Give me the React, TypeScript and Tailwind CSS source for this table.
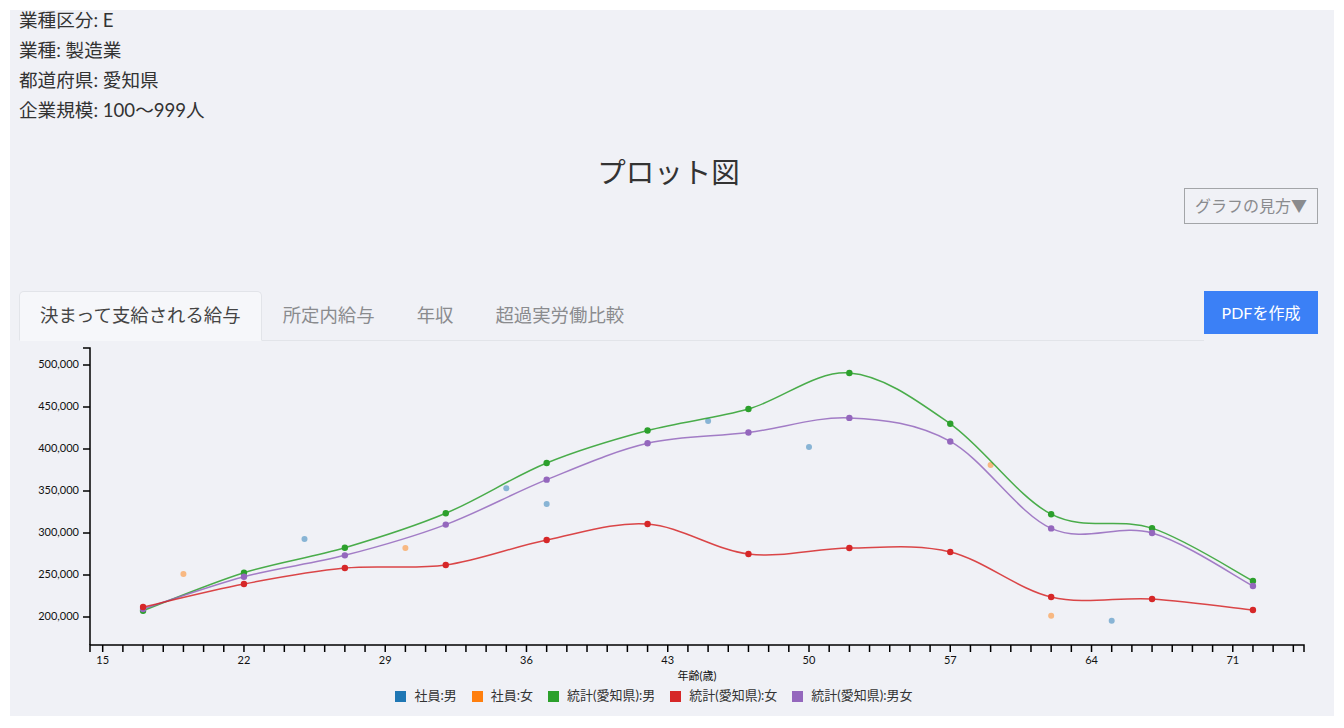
import React from 'react';

type Pt = [number, number];

const COLORS = {
  blue: '#1f77b4',
  orange: '#ff7f0e',
  green: '#2ca02c',
  red: '#d62728',
  purple: '#9467bd',
};

// 統計ライン (年齢, 円)
const statMale: Pt[] = [
  [17, 207500], [22, 252700], [27, 282500], [32, 323500], [37, 383300], [42, 422000],
  [47, 447600], [52, 490500], [57, 430000], [62, 322400], [67, 305800], [72, 242900],
];
const statBoth: Pt[] = [
  [17, 209500], [22, 248000], [27, 273400], [32, 310000], [37, 363500], [42, 406800],
  [47, 419600], [52, 437000], [57, 409000], [62, 305500], [67, 300000], [72, 236900],
];
const statFemale: Pt[] = [
  [17, 211900], [22, 239300], [27, 258300], [32, 261900], [37, 291700], [42, 310700],
  [47, 275000], [52, 282100], [57, 277400], [62, 223800], [67, 221400], [72, 208300],
];
const staffMale: Pt[] = [
  [25, 292900], [35, 353200], [37, 334500], [45, 433300], [50, 402400], [65, 195600],
];
const staffFemale: Pt[] = [
  [19, 251200], [30, 282100], [59, 381000], [62, 201500],
];

const X0 = 71;
const X1 = 1285;
const Y_TOP = 7;
const Y_BOTTOM = 304;

const xs = (age: number) => 83.7 + (age - 15) * 20.18;
const ys = (v: number) => 276 - (v - 200000) * 0.00084;

const cardinal = (pts: Pt[]) => {
  const p = pts.map(([a, v]) => [xs(a), ys(v)] as Pt);
  let d = `M${p[0][0]},${p[0][1]}`;
  for (let i = 0; i < p.length - 1; i++) {
    const p0 = p[Math.max(i - 1, 0)];
    const p1 = p[i];
    const p2 = p[i + 1];
    const p3 = p[Math.min(i + 2, p.length - 1)];
    const c1x = p1[0] + (p2[0] - p0[0]) / 6;
    const c1y = p1[1] + (p2[1] - p0[1]) / 6;
    const c2x = p2[0] - (p3[0] - p1[0]) / 6;
    const c2y = p2[1] - (p3[1] - p1[1]) / 6;
    d += ` C${c1x},${c1y} ${c2x},${c2y} ${p2[0]},${p2[1]}`;
  }
  return d;
};

const yTicks = [200000, 250000, 300000, 350000, 400000, 450000, 500000];
const xTicks = Array.from({ length: 60 }, (_, i) => 15 + i);
const xLabels = [15, 22, 29, 36, 43, 50, 57, 64, 71];

const lines = [
  { data: statMale, color: COLORS.green },
  { data: statBoth, color: COLORS.purple },
  { data: statFemale, color: COLORS.red },
];

const legend = [
  { label: '社員:男', color: COLORS.blue },
  { label: '社員:女', color: COLORS.orange },
  { label: '統計(愛知県):男', color: COLORS.green },
  { label: '統計(愛知県):女', color: COLORS.red },
  { label: '統計(愛知県):男女', color: COLORS.purple },
];

const tabs = ['決まって支給される給与', '所定内給与', '年収', '超過実労働比較'];

const PlotChart = () => (
  <svg width="1299" height="346" className="block" style={{ fontFamily: "Lato, 'Noto Sans CJK JP', sans-serif" }}>
    {/* y axis */}
    <path d={`M${X0 - 7},${Y_TOP} H${X0} V${Y_BOTTOM}`} fill="none" stroke="#000" strokeWidth="1.5" />
    {yTicks.map((t) => (
      <g key={t}>
        <line x1={X0 - 7} x2={X0} y1={ys(t)} y2={ys(t)} stroke="#000" strokeWidth="1.5" />
        <text x={X0 - 11} y={ys(t)} textAnchor="end" dominantBaseline="middle" fontSize="11" fill="#111">
          {t.toLocaleString('en-US')}
        </text>
      </g>
    ))}
    {/* x axis */}
    <path d={`M${X0},${Y_BOTTOM + 7} V${Y_BOTTOM} H${X1} V${Y_BOTTOM + 7}`} fill="none" stroke="#000" strokeWidth="1.5" />
    {xTicks.map((a) => (
      <line key={a} x1={xs(a)} x2={xs(a)} y1={Y_BOTTOM} y2={Y_BOTTOM + 7} stroke="#000" strokeWidth="1.5" />
    ))}
    {xLabels.map((a) => (
      <text key={a} x={xs(a)} y={320} textAnchor="middle" dominantBaseline="middle" fontSize="11" fill="#111">
        {a}
      </text>
    ))}
    <text x={(X0 + X1) / 2} y={336} textAnchor="middle" dominantBaseline="middle" fontSize="11" fill="#111">
      年齢(歳)
    </text>

    {/* 社員の点 */}
    {staffMale.map(([a, v]) => (
      <circle key={`m${a}`} cx={xs(a)} cy={ys(v)} r="3" fill={COLORS.blue} fillOpacity="0.5" />
    ))}
    {staffFemale.map(([a, v]) => (
      <circle key={`f${a}`} cx={xs(a)} cy={ys(v)} r="3" fill={COLORS.orange} fillOpacity="0.5" />
    ))}

    {/* 統計ライン */}
    {lines.map((l) => (
      <g key={l.color}>
        <path d={cardinal(l.data)} fill="none" stroke={l.color} strokeWidth="1.5" strokeOpacity="0.85" />
        {l.data.map(([a, v]) => (
          <circle key={a} cx={xs(a)} cy={ys(v)} r="3.2" fill={l.color} />
        ))}
      </g>
    ))}
  </svg>
);

export default function App() {
  return (
    <div className="h-[728px] w-full overflow-hidden bg-white p-[10px]">
      <div
        className="flex h-[706px] flex-col bg-[#f0f1f6] pl-[9px] pr-[16px] text-[#333]"
        style={{ fontFamily: "Lato, 'Noto Sans CJK JP', sans-serif" }}
      >
        <div className="-mt-[5px] text-[18.6px] leading-[30px]">
          <p>業種区分: E</p>
          <p>業種: 製造業</p>
          <p>都道府県: 愛知県</p>
          <p>企業規模: 100〜999人</p>
        </div>

        <h2 className="mt-[31px] text-center text-[28.5px] leading-[32px] font-normal text-[#333]">プロット図</h2>

        <div className="flex justify-end">
          <button className="h-[36px] border border-[#a3a5a8] px-[10px] text-[16px] text-[#8a8b8e]">
            グラフの見方▼
          </button>
        </div>

        <div className="mt-[67px] flex items-start">
          <div className="flex flex-1 border-b border-[#e2e4e9]">
            {tabs.map((t, i) => (
              <div
                key={t}
                className={
                  i === 0
                    ? '-mb-px flex h-[50px] items-center rounded-t-[5px] border border-[#e2e4e9] border-b-[#f6f7fa] bg-[#f6f7fa] px-[20px] text-[18.4px] text-[#444]'
                    : '-mb-px flex h-[50px] items-center border border-transparent px-[20px] text-[18.4px] text-[#8a8b8e]'
                }
              >
                {t}
              </div>
            ))}
          </div>
          <button className="h-[43px] w-[114px] bg-[#3b80f6] text-[16px] text-white">PDFを作成</button>
        </div>

        <PlotChart />

        <div className="flex h-[18px] items-center justify-center gap-[15px] pr-[29px] text-[13px] text-[#333]">
          {legend.map((l) => (
            <div key={l.label} className="flex items-center gap-[8px]">
              <span className="h-[11px] w-[11px]" style={{ backgroundColor: l.color }} />
              <span>{l.label}</span>
            </div>
          ))}
        </div>
      </div>
    </div>
  );
}
